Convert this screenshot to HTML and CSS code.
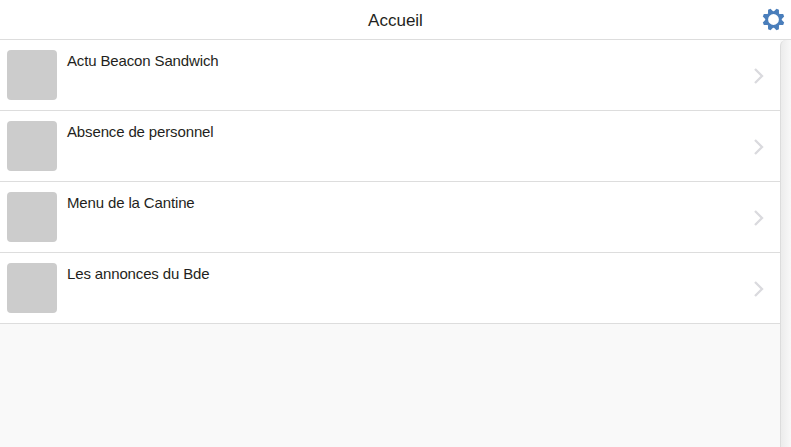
FILE: index.html
```html
<!DOCTYPE html>
<html lang="fr">
<head>
<meta charset="utf-8">
<title>Accueil</title>
<link rel="stylesheet" href="styles.css">
</head>
<body>
<header class="toolbar">
  <h1 class="title">Accueil</h1>
  <svg class="gear" viewBox="-11.5 -11.5 23 23" aria-hidden="true">
    <circle r="6.8" fill="none" stroke="#4a7ebb" stroke-width="2.8"/>
    <g fill="#4a7ebb">
      <path id="tooth" d="M-3-7.2L-1.3-11H1.3L3-7.2Z" transform="rotate(22.5)"/>
      <use href="#tooth" transform="rotate(45)"/>
      <use href="#tooth" transform="rotate(90)"/>
      <use href="#tooth" transform="rotate(135)"/>
      <use href="#tooth" transform="rotate(180)"/>
      <use href="#tooth" transform="rotate(225)"/>
      <use href="#tooth" transform="rotate(270)"/>
      <use href="#tooth" transform="rotate(315)"/>
    </g>
  </svg>
</header>
<main class="page">
  <ul class="list">
    <li class="item"><span class="thumb"></span><span class="label">Actu Beacon Sandwich</span><svg class="chevron" viewBox="0 0 10 16"><path d="M1 1L8 8L1 15"/></svg></li>
    <li class="item"><span class="thumb"></span><span class="label">Absence de personnel</span><svg class="chevron" viewBox="0 0 10 16"><path d="M1 1L8 8L1 15"/></svg></li>
    <li class="item"><span class="thumb"></span><span class="label">Menu de la Cantine</span><svg class="chevron" viewBox="0 0 10 16"><path d="M1 1L8 8L1 15"/></svg></li>
    <li class="item"><span class="thumb"></span><span class="label">Les annonces du Bde</span><svg class="chevron" viewBox="0 0 10 16"><path d="M1 1L8 8L1 15"/></svg></li>
  </ul>
  <div class="track"></div>
</main>
</body>
</html>
```
FILE: styles.css
```css
* {
  box-sizing: border-box;
}

body {
  margin: 0;
  height: 100vh;
  display: flex;
  flex-direction: column;
  overflow: hidden;
  background: #f9f9f9;
  color: #1f1f21;
  font-family: "Liberation Sans", Arial, sans-serif;
}

.toolbar {
  flex: none;
  height: 40px;
  padding: 0 6px 0 29px;
  display: flex;
  align-items: flex-start;
  background: #fff;
  border-bottom: 1px solid #ddd;
}

.title {
  flex: 1;
  margin: 0;
  font-size: 17px;
  font-weight: 400;
  line-height: 41px;
  text-align: center;
}

.gear {
  width: 23px;
  height: 23px;
  margin-top: 8px;
}

.page {
  flex: 1;
  display: flex;
}

.list {
  flex: 1;
  margin: 0;
  padding: 0;
  list-style: none;
}

.item {
  height: 71px;
  padding: 10px 16px 10px 7px;
  display: flex;
  background: #fff;
  border-bottom: 1px solid #ddd;
}

.thumb {
  width: 50px;
  height: 50px;
  margin-right: 10px;
  border-radius: 4px;
  background: #ccc;
}

.label {
  flex: 1;
  font-size: 15px;
  line-height: 21px;
  letter-spacing: -0.14px;
}

.chevron {
  width: 10px;
  height: 16px;
  margin-top: 18px;
  fill: none;
  stroke: #dadade;
  stroke-width: 2.3;
}

.track {
  width: 11px;
  border-left: 1px solid #dcdcdc;
  border-top-left-radius: 6px;
  background: linear-gradient(to right, #ececec, #f8f8f8);
}
```
